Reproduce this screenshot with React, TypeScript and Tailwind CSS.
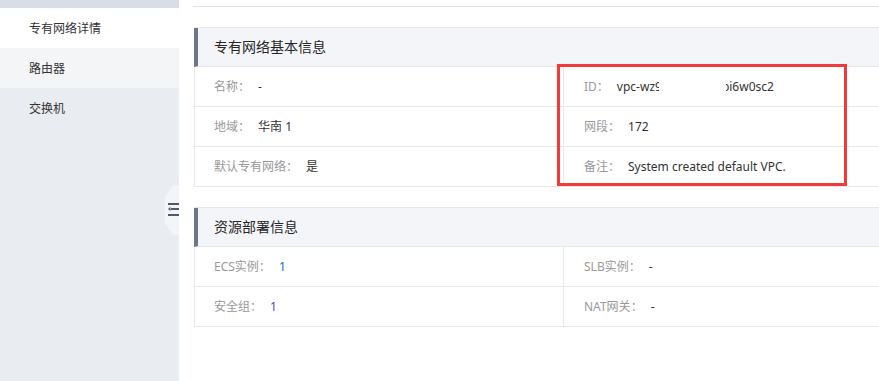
import React from 'react';

type Item = { label: string; value: React.ReactNode };

const basicLeft: Item[] = [
  { label: '名称', value: '-' },
  { label: '地域', value: '华南 1' },
  { label: '默认专有网络', value: '是' },
];

const basicRight: Item[] = [
  {
    label: 'ID',
    value: (
      <span className="relative">
        vpc-wz9
        <span className="inline-block w-[60px]" />
        bi6w0sc2
        <span className="absolute left-[42px] top-0 h-full w-[67px] bg-white" />
      </span>
    ),
  },
  { label: '网段', value: '172' },
  { label: '备注', value: 'System created default VPC.' },
];

const resLeft: Item[] = [
  { label: 'ECS实例', value: <span className="text-[#0b6fd4]">1</span> },
  { label: '安全组', value: <span className="text-[#4b42cf]">1</span> },
];

const resRight: Item[] = [
  { label: 'SLB实例', value: '-' },
  { label: 'NAT网关', value: '-' },
];

function Cell({ item, right }: { item: Item; right?: boolean }) {
  return (
    <div
      className={`flex h-10 items-center border-b border-[#e8e8e8] text-xs ${
        right ? 'flex-1 pl-5' : 'w-[369px] border-r pl-[19px]'
      }`}
    >
      <span className="text-[#999]">{item.label}：</span>
      <span className="ml-2 text-[#333]">{item.value}</span>
    </div>
  );
}

function Panel({ title, left, right }: { title: string; left: Item[]; right: Item[] }) {
  return (
    <div className="w-[739px] border-x border-t border-[#e6e6e6]">
      <div className="-ml-px flex h-[39px] items-center border-b border-l-4 border-b-[#e3e6ea] border-l-[#6c7685] bg-[#f4f5f9] pl-4 text-sm text-[#262626]">
        {title}
      </div>
      {left.map((item, i) => (
        <div key={item.label} className="flex">
          <Cell item={item} />
          <Cell item={right[i]} right />
        </div>
      ))}
    </div>
  );
}

export default function App() {
  return (
    <div className="relative flex h-[381px] w-[879px] overflow-hidden bg-white font-['Noto_Sans','Noto_Sans_CJK_SC',sans-serif]">
      {/* 侧边栏 */}
      <aside className="relative w-[179px] shrink-0 bg-[#e9ecf0]">
        <div className="h-2 bg-[#d9dde5]" />
        <div className="flex h-10 items-center bg-white pl-[29px] pt-0.5 text-xs text-[#333]">专有网络详情</div>
        <div className="flex h-10 items-center bg-[#f4f5f7] pl-[29px] pt-0.5 text-xs text-[#333]">路由器</div>
        <div className="flex h-10 items-center pl-[29px] pt-0.5 text-xs text-[#333]">交换机</div>

        {/* 收起按钮 */}
        <div className="absolute right-0 top-[185px] h-[50px] w-[14px]">
          <svg width="14" height="50" viewBox="0 0 14 50">
            <polygon points="14,0 8,0 0,12 0,38 8,50 14,50" fill="#f4f5f8" />
            <rect x="3" y="18" width="11" height="2" fill="#4f5968" />
            <rect x="6" y="23" width="8" height="2" fill="#4f5968" />
            <polygon points="3,24 5.5,21.8 5.5,26.2" fill="#4f5968" />
            <rect x="3" y="29" width="11" height="2" fill="#4f5968" />
          </svg>
        </div>
      </aside>

      {/* 内容 */}
      <main className="flex-1 overflow-hidden pl-[14px]">
        <div className="h-[7px] border-b border-[#e3e3e3]" />
        <div className="ml-px mt-5">
          <Panel title="专有网络基本信息" left={basicLeft} right={basicRight} />
        </div>
        <div className="ml-px mt-5">
          <Panel title="资源部署信息" left={resLeft} right={resRight} />
        </div>
      </main>

      {/* 标注框 */}
      <div className="absolute left-[557px] top-[64px] h-[122px] w-[290px] border-[3px] border-[#f33a3a]" />
    </div>
  );
}
